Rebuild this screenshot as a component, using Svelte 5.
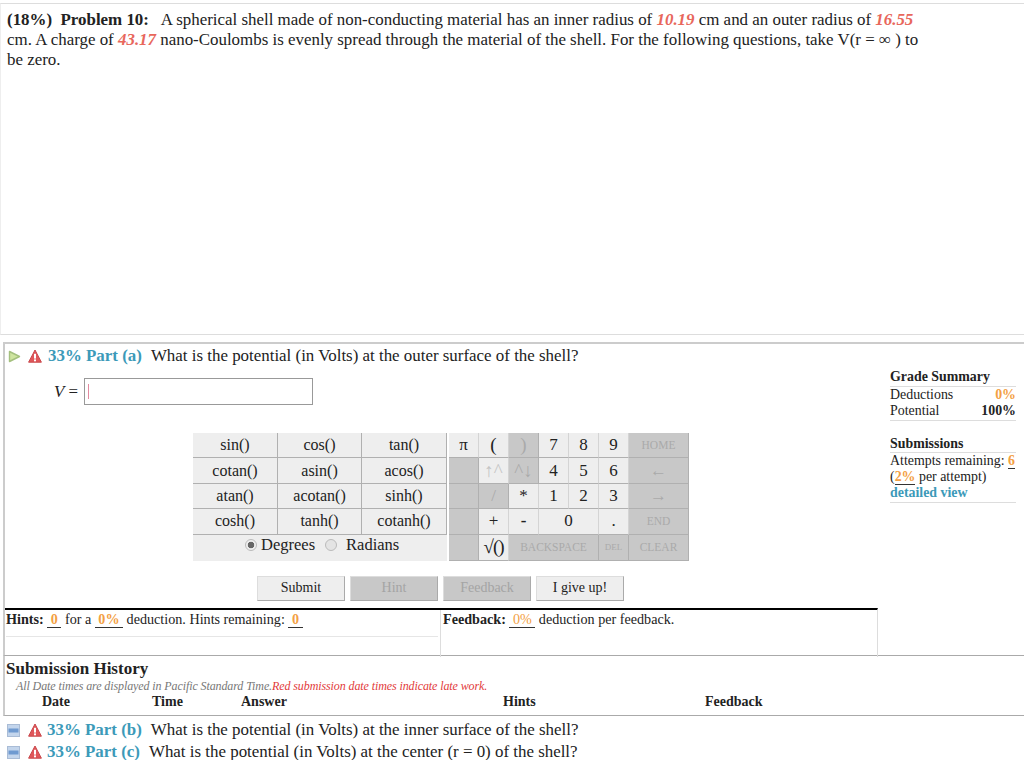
<script>
	const funcs = ["sin()", "cos()", "tan()", "cotan()", "asin()", "acos()", "atan()", "acotan()", "sinh()", "cosh()", "tanh()", "cotanh()"];

	// span = grid columns, off = disabled grey key
	const keys = [
		{ t: "π" }, { t: "(", big: true }, { t: ")", off: true, big: true }, { t: "7" }, { t: "8" }, { t: "9" }, { t: "HOME", off: true, small: true },
		{ t: "", off: true }, { t: "↑^", faint: true, big: true }, { t: "^↓", off: true, big: true }, { t: "4" }, { t: "5" }, { t: "6" }, { t: "←", off: true },
		{ t: "", off: true }, { t: "/", off: true }, { t: "*" }, { t: "1" }, { t: "2" }, { t: "3" }, { t: "→", off: true },
		{ t: "", off: true }, { t: "+" }, { t: "-", bold: true }, { t: "0", span: 2 }, { t: "." }, { t: "END", off: true, small: true },
		{ t: "", off: true }, { t: "√()", root: true }, { t: "BACKSPACE", off: true, span: 3, small: true }, { t: "DEL", off: true, tiny: true }, { t: "CLEAR", off: true, small: true }
	];
</script>

{#snippet warn()}
	<svg class="warn" width="14" height="15" viewBox="0 0 14 15">
		<path d="M7 1 L13.4 13.2 H0.6 Z" fill="#e0575a" stroke="#c9474b" stroke-width="1" stroke-linejoin="round" />
		<rect x="6" y="4.8" width="2" height="4.8" fill="#fff" />
		<rect x="6" y="10.4" width="2" height="1.9" fill="#fff" />
	</svg>
{/snippet}

{#snippet minus()}
	<svg class="expand" width="13" height="13" viewBox="0 0 13 13">
		<rect x="0.5" y="0.5" width="12" height="12" fill="#c3d5ec" stroke="#a9bcd6" />
		<rect x="1.5" y="4.5" width="10" height="4" fill="#6f9ad0" />
	</svg>
{/snippet}

<div class="page">
	<section class="problem">
		<p>
			<b>(18%)&nbsp; Problem 10:</b>&nbsp;&nbsp; A spherical shell made of non-conducting material has an inner radius of <i class="num">10.19</i> cm and an outer radius of <i class="num">16.55</i><br />
			cm. A charge of <i class="num">43.17</i> nano-Coulombs is evenly spread through the material of the shell. For the following questions, take V(r = ∞ ) to<br />
			be zero.
		</p>
	</section>

	<section class="part-a">
		<div class="main">
			<div class="part-head">
				<svg class="play" width="13" height="13" viewBox="0 0 13 13">
					<path d="M1.5 1.5 L11.5 6.5 L1.5 11.5 Z" fill="#cfe5a0" stroke="#a4c07e" stroke-width="1.4" stroke-linejoin="round" />
				</svg>
				{@render warn()}
				<b class="pct">33% Part (a)</b>
				<span class="q">What is the potential (in Volts) at the outer surface of the shell?</span>
			</div>

			<div class="answer">
				<span class="var"><i>V</i> =</span>
				<div class="field"><span class="caret"></span></div>
			</div>

			<div class="calc">
				<div class="funcs">
					{#each funcs as f}
						<div class="fn">{f}</div>
					{/each}
					<div class="angle">
						<span class="radio on"></span><span class="lbl">Degrees</span>
						<span class="radio"></span><span class="lbl">Radians</span>
					</div>
				</div>
				<div class="keys">
					{#each keys as k}
						<div
							class="key"
							class:off={k.off}
							class:faint={k.faint}
							class:small={k.small}
							class:tiny={k.tiny}
							class:bold={k.bold}
							class:big={k.big}
							class:root={k.root}
							style={k.span ? `grid-column: span ${k.span}` : undefined}
						>{k.t}</div>
					{/each}
				</div>
			</div>

			<div class="actions">
				<div class="btn">Submit</div>
				<div class="btn off">Hint</div>
				<div class="btn off">Feedback</div>
				<div class="btn">I give up!</div>
			</div>

			<div class="hints">
				<div class="cell left">
					<div class="cell-text">
						<b>Hints:</b> <span class="ul or strong">&nbsp;0&nbsp;</span> for a <span class="ul or strong">&nbsp;0%&nbsp;</span> deduction. Hints remaining: <span class="ul or strong">&nbsp;0&nbsp;</span>
					</div>
					<div class="rule"></div>
				</div>
				<div class="cell right">
					<div class="cell-text">
						<b>Feedback:</b> <span class="ul or">&nbsp;0%&nbsp;</span> deduction per feedback.
					</div>
				</div>
			</div>
		</div>

		<aside class="summary">
			<div class="s-title">Grade Summary</div>
			<div class="s-row"><span>Deductions</span><b class="or">0%</b></div>
			<div class="s-row s-end"><span>Potential</span><b>100%</b></div>
			<div class="s-title second">Submissions</div>
			<div class="s-line">Attempts remaining: <span class="ul or strong">6</span></div>
			<div class="s-line">(<span class="ul or strong">2%</span> per attempt)</div>
			<div class="s-line s-end"><b class="link">detailed view</b></div>
		</aside>
	</section>

	<section class="history">
		<h3>Submission History</h3>
		<div class="note"><i>All Date times are displayed in Pacific Standard Time.</i><i class="late">Red submission date times indicate late work.</i></div>
		<div class="cols">
			<b class="c-date">Date</b>
			<b class="c-time">Time</b>
			<b class="c-ans">Answer</b>
			<b class="c-hints">Hints</b>
			<b>Feedback</b>
		</div>
	</section>

	<div class="part-row first">
		{@render minus()}
		{@render warn()}
		<b class="pct">33% Part (b)</b>
		<span class="q">What is the potential (in Volts) at the inner surface of the shell?</span>
	</div>
	<div class="part-row">
		{@render minus()}
		{@render warn()}
		<b class="pct">33% Part (c)</b>
		<span class="q">What is the potential (in Volts) at the center (r = 0) of the shell?</span>
	</div>
</div>

<style>
	:global(body) {
		margin: 0;
		background: #fff;
	}

	.page {
		width: 1024px;
		height: 760px;
		overflow: hidden;
		font-family: "Liberation Serif", "Times New Roman", serif;
		font-size: 16.92px;
		color: #222;
		padding-top: 3px;
		box-sizing: border-box;
	}

	.problem {
		height: 332px;
		box-sizing: border-box;
		border-top: 1px solid #ddd;
		border-bottom: 1px solid #ddd;
		border-left: 1px solid #eee;
		padding: 6px 6px 0;
	}

	.problem p {
		margin: 0;
		line-height: 20px;
		white-space: nowrap;
	}

	.num {
		color: #e8675c;
		font-weight: bold;
	}

	.part-a {
		margin: 7px 0 0 3px;
		height: 314px;
		box-sizing: border-box;
		border-top: 2px solid #ccc;
		border-left: 2px solid #ccc;
		border-bottom: 1px solid #aaa;
		display: flex;
	}

	.main {
		width: 872px;
		flex: none;
	}

	.part-head {
		display: flex;
		align-items: center;
		height: 24px;
		padding-left: 3px;
	}

	.play {
		margin-right: 7px;
	}

	.pct {
		color: #3c9ab9;
		margin-left: 6px;
	}

	.q {
		margin-left: 9px;
	}

	.answer {
		display: flex;
		align-items: center;
		margin-top: 10px;
		padding-left: 49px;
		height: 27px;
	}

	.var {
		width: 30px;
	}

	.field {
		width: 229px;
		height: 27px;
		box-sizing: border-box;
		border: 1px solid #999;
		padding: 5px 3px;
	}

	.caret {
		display: block;
		width: 1px;
		height: 15px;
		background: #e48aa0;
	}

	.calc {
		display: flex;
		margin: 28px 0 0 188px;
		font-size: 16px;
	}

	.funcs {
		width: 254px;
		display: grid;
		grid-template-columns: 85px 84px 85px;
		grid-template-rows: repeat(4, 25.4px) 26px;
		background: #eee;
	}

	.fn {
		display: flex;
		align-items: center;
		justify-content: center;
		border-right: 1px solid #b0b0b0;
		border-bottom: 1px solid #b0b0b0;
	}

	.angle {
		grid-column: 1 / 4;
		display: flex;
		align-items: center;
		padding: 0 0 5px 52px;
		font-size: 16.5px;
	}

	.radio {
		width: 10px;
		height: 10px;
		border: 1px solid #bbb;
		border-radius: 50%;
		background: #e4e4e4;
		margin-right: 9px;
	}

	.radio.on {
		background: radial-gradient(circle, #666 0 3px, #eee 3.6px);
		margin-right: 4px;
	}

	.lbl {
		margin-right: 10px;
	}

	.keys {
		margin-left: 2px;
		width: 240px;
		display: grid;
		grid-template-columns: repeat(6, 30px) 60px;
		grid-template-rows: repeat(4, 25.4px) 26px;
	}

	.key {
		display: flex;
		align-items: center;
		justify-content: center;
		background: #eee;
		border-right: 1px solid #d4d4d4;
		border-bottom: 1px solid #b0b0b0;
		overflow: hidden;
		white-space: nowrap;
		font-size: 17px;
	}

	.key.off {
		background: #c8c8c8;
		color: #aaa;
		border-right-color: #b0b0b0;
	}

	.key.faint {
		color: #c4c4c4;
	}

	.key.small {
		font-size: 11.5px;
	}

	.key.tiny {
		font-size: 9px;
	}

	.key.bold {
		font-weight: bold;
	}

	.key.big {
		font-size: 19px;
		line-height: 20px;
	}

	.key.root {
		font-size: 19px;
		letter-spacing: -1px;
	}

	.actions {
		display: flex;
		gap: 5px;
		margin: 15px 0 0 252px;
	}

	.btn {
		width: 88px;
		height: 25px;
		box-sizing: border-box;
		background: #eee;
		border-right: 1px solid #aaa;
		border-bottom: 1px solid #aaa;
		border-top: 1px solid #ddd;
		border-left: 1px solid #ddd;
		display: flex;
		align-items: center;
		justify-content: center;
		font-size: 14px;
	}

	.btn.off {
		background: #c8c8c8;
		color: #a4a4a4;
	}

	.hints {
		display: flex;
		margin-top: 7px;
		height: 49px;
		border-top: 2px solid #000;
		font-size: 14.15px;
		box-sizing: border-box;
		width: 873px;
		border-right: 1px solid #ddd;
	}

	.cell {
		box-sizing: border-box;
	}

	.cell.left {
		width: 436px;
		border-right: 1px solid #ddd;
	}

	.cell.right {
		flex: 1;
		padding-left: 1px;
	}

	.cell-text {
		line-height: 18px;
		padding-left: 1px;
	}

	.rule {
		margin: 8px 2px 0 1px;
		height: 1px;
		background: #e6e6e6;
	}

	.or {
		color: #f3a043;
	}

	.ul {
		display: inline-block;
		line-height: 15px;
		border-bottom: 1px solid #333;
	}

	.strong {
		font-weight: bold;
	}

	.summary {
		margin-left: 13px;
		width: 126px;
		padding-top: 25px;
		font-size: 13.9px;
		line-height: 16px;
	}

	.s-title {
		font-weight: bold;
		border-bottom: 1px solid #ddd;
		height: 17px;
		line-height: 16px;
	}

	.s-title.second {
		height: 16px;
		margin-top: 15px;
	}

	.s-row {
		display: flex;
		justify-content: space-between;
	}

	.s-end {
		border-bottom: 1px solid #ddd;
		padding-bottom: 1px;
	}

	.link {
		color: #3c9ab9;
	}

	.history {
		margin-left: 3px;
		height: 60px;
		border-left: 2px solid #ccc;
		border-bottom: 1px solid #aaa;
		box-sizing: border-box;
	}

	h3 {
		margin: 0;
		padding: 4px 0 0 1px;
		font-size: 17px;
		line-height: 18px;
		font-weight: bold;
	}

	.note {
		font-size: 12px;
		line-height: 14px;
		margin: 1px 0 0 11px;
		color: #777;
		letter-spacing: -0.1px;
	}

	.late {
		color: #e23a3a;
	}

	.cols {
		display: flex;
		font-size: 14px;
		line-height: 16px;
		margin: 1px 0 0 37px;
	}

	.c-date { width: 110px; }
	.c-time { width: 89px; }
	.c-ans { width: 262px; }
	.c-hints { width: 202px; }

	.part-row {
		display: flex;
		align-items: center;
		height: 22px;
		padding-left: 7px;
	}

	.part-row.first {
		margin-top: 3px;
	}

	.part-row .warn {
		margin-left: 8px;
	}

	.part-row .pct {
		margin-left: 5px;
	}
</style>
